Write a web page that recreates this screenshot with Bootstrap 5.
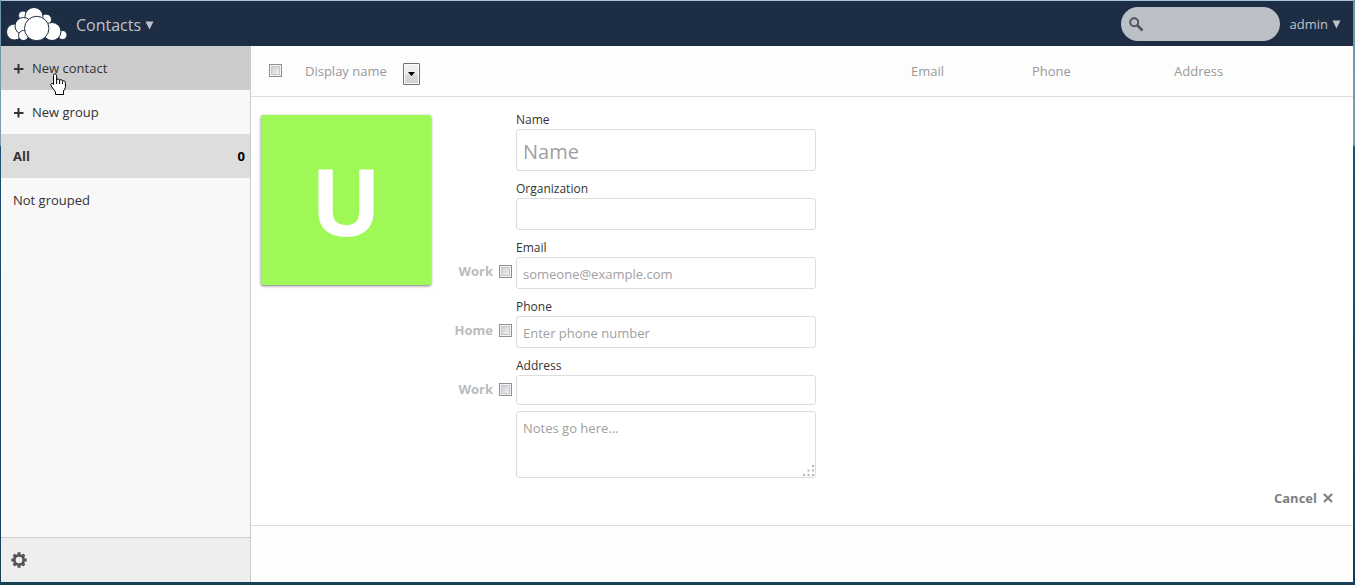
<!DOCTYPE html>
<html lang="en">
<head>
<meta charset="utf-8">
<meta name="viewport" content="width=device-width, initial-scale=1">
<title>Contacts</title>
<link href="https://cdn.jsdelivr.net/npm/bootstrap@5.3.0/dist/css/bootstrap.min.css" rel="stylesheet">
<style>
  body {
    font-family: "Open Sans", "Noto Sans", sans-serif;
    font-size: 13px;
    line-height: 18px;
    color: #333;
    background: linear-gradient(#6b93ab, #7d9fb2 145px, #1c506e 147px, #173f58);
    padding: 0 2px 3px 1px;
  }
  .desk-edge { height: 1px; background: #a6c3db; }
  .app { min-height: calc(100vh - 4px); }

  /* top bar */
  .topbar { height: 45px; background: #1d2d44; padding: 0 12px 0 5px; }
  .topbar a, .user-menu { color: #bfc3c9; text-decoration: none; }
  .app-title { font-size: 16px; line-height: 24px; margin-left: 9px; padding-top: 3px; }
  .user-menu svg { margin-top: 2px; }
  .search-box { width: 159px; margin-right: 10px; }
  .search-box input {
    height: 34px; border: 0; border-radius: 17px; background: #bbc0c7;
    padding: 0 12px 0 30px; font-size: 13px;
  }
  .search-box svg { left: 8px; top: 10px; }

  /* sidebar */
  .sidebar { width: 250px; background: #f8f8f8; border-right: 1px solid #ccc; }
  .side-link {
    height: 44px; padding: 0 5px 0 12px; width: 100%; border: 0; background: none;
    color: #333; text-decoration: none; text-align: left;
  }
  .side-link.hovered { background: #ccc; }
  .side-link.current { background: #ddd; font-weight: 700; }
  .side-link svg { margin-right: 8px; }
  .side-link .total { color: #000; }
  .settings-bar { height: 45px; background: #eee; border-top: 1px solid #ccc; }
  .settings-bar button { border: 0; background: none; padding: 0 10px; }
  .pointer { left: 49px; top: 27px; pointer-events: none; }

  /* contact list header */
  .list-head { table-layout: fixed; width: 100%; border-bottom: 1px solid #ddd; background: #fdfdfd; }
  .list-head th { height: 50px; padding: 0; font-weight: 400; color: #999; vertical-align: middle; }
  .list-head .col-tick { width: 54px; padding-left: 18px; }
  .col-mail { width: 121px; }
  .col-tel { width: 142px; }
  .col-addr { width: 179px; }
  .tick {
    appearance: none; width: 13px; height: 13px; margin: 0; flex: none;
    border: 1px solid #8e8f8f; box-shadow: inset 0 0 0 1px #f4f4f4, inset 0 0 0 2px #c4c7cc;
    background: linear-gradient(135deg, #c4c8d0, #f8f8f8);
  }
  .pick { width: 17px; height: 22px; margin-left: 16px; margin-top: 6px; }
  .pick select {
    appearance: none; width: 17px; height: 22px; padding: 0; border: 1px solid #707070;
    border-radius: 1px; background: linear-gradient(#f2f2f2, #ebebeb 50%, #ddd 50%, #cfcfcf);
    box-shadow: inset 0 0 0 1px #fbfbfb;
  }
  .pick svg { left: 5px; top: 9px; pointer-events: none; }

  /* contact form */
  .main-pane { background: #fdfdfd; }
  .editor { background: #fff; padding: 14px 20px 18px 10px; border-bottom: 1px solid #ddd; }
  .portrait {
    width: 170px; height: 170px; margin-top: 4px; border-radius: 2px; background: #9ef856;
    color: #fff; font-size: 94px; line-height: 170px; font-weight: 700; text-align: center;
    box-shadow: 0 1px 3px #777;
  }
  .field-row { margin-bottom: 9px; }
  .kind { width: 81px; margin-right: 4px; padding-top: 18px; }
  .kind label { height: 28px; gap: 6px; font-weight: 700; color: #bbb; }
  .kind .tick { margin-top: 1px; }
  .entry { width: 300px; }
  .entry label { font-size: 12px; line-height: 18px; height: 18px; }
  .entry input, .entry textarea {
    width: 100%; height: 32px; padding: 3px 6px 1px; border: 1px solid #ddd; border-radius: 3px;
    background: #fff; color: #333; font-size: 13px; line-height: 18px;
  }
  .entry input.full-name { height: 42px; font-size: 20px; line-height: 28px; padding-top: 4px; }
  .entry input.street { height: 30px; }
  .entry textarea { height: 67px; padding: 7px 6px; resize: none; }
  .entry ::placeholder { color: #a0a0a0; opacity: 1; }
  .notes { margin-top: 6px; }
  .grip { right: 1px; bottom: 1px; pointer-events: none; }
  .cancel-row { padding-top: 11px; }
  .cancel { border: 0; background: none; padding: 0; font-weight: 700; color: #808080; gap: 6px; }
</style>
</head>
<body>
<div class="desk-edge"></div>
<div class="app d-flex flex-column">
  <header class="topbar d-flex align-items-center">
    <a href="#" aria-label="Home" class="d-flex">
      <svg width="61" height="34" viewBox="6 6 61 34" fill="#fff" stroke="#1d2d44" stroke-width="1">
        <circle cx="46" cy="18.500" r="5.500"/>
        <circle cx="23" cy="14.500" r="4.500"/>
        <circle cx="34" cy="15.500" r="9"/>
        <circle cx="62.500" cy="34" r="4.500"/>
        <circle cx="14.500" cy="31" r="8"/>
        <circle cx="23.500" cy="25" r="8.500"/>
        <circle cx="23.500" cy="34.500" r="5"/>
        <circle cx="52" cy="30.500" r="9"/>
        <circle cx="36.700" cy="27.500" r="12.200"/>
      </svg>
    </a>
    <a href="#" class="app-title d-flex align-items-center gap-1">Contacts
      <svg width="9" height="9" viewBox="0 0 9 9" fill="#bfc3c9"><path d="M.5.5h8l-4 8z"/></svg>
    </a>
    <div class="search-box position-relative ms-auto">
      <input type="search" class="w-100" aria-label="Search">
      <svg class="position-absolute" width="15" height="15" viewBox="0 0 15 15" fill="none" stroke="#50565f"><circle cx="5.200" cy="5.200" r="4" stroke-width="2"/><path d="M8 8l5.500 5.500" stroke-width="2.600"/></svg>
    </div>
    <a href="#" class="user-menu d-flex align-items-center gap-1">admin
      <svg width="9" height="9" viewBox="0 0 9 9" fill="#bfc3c9"><path d="M.5.5h8l-4 8z"/></svg>
    </a>
  </header>

  <div class="d-flex flex-grow-1">
    <nav class="sidebar d-flex flex-column flex-shrink-0 position-relative">
      <button type="button" class="side-link hovered d-flex align-items-center">
        <svg width="11" height="11" viewBox="0 0 11 11" stroke="#333" stroke-width="2"><path d="M5.500 1v9.500M1 6h9.500"/></svg>New contact
      </button>
      <button type="button" class="side-link d-flex align-items-center">
        <svg width="11" height="11" viewBox="0 0 11 11" stroke="#333" stroke-width="2"><path d="M5.500 1v9.500M1 6h9.500"/></svg>New group
      </button>
      <a href="#" class="side-link current d-flex align-items-center justify-content-between">All<span class="total">0</span></a>
      <a href="#" class="side-link d-flex align-items-center">Not grouped</a>
      <div class="settings-bar d-flex mt-auto">
        <button type="button" aria-label="Settings" class="d-flex align-items-center">
          <svg width="16" height="16" viewBox="-8 -8 16 16" fill="none" stroke="#555">
            <circle r="4.700" stroke-width="2.800"/>
            <path stroke-width="3" d="M0-5v-2.700M0 5v2.700M-5 0h-2.700M5 0h2.700M3.600-3.600l1.800-1.800M-3.600-3.600l-1.800-1.800M3.600 3.600l1.800 1.800M-3.600 3.600l-1.800 1.800"/>
          </svg>
        </button>
      </div>
      <svg class="pointer position-absolute" width="17" height="23" viewBox="0 0 17 23" fill="#fff" stroke="#000" stroke-width="1" stroke-linejoin="round">
        <path d="M3.500 2.500Q3.500.8 5 .8t1.600 1.700V7q0-1 1.400-1t1.600 1.500q.2-1 1.500-.8t1.400 1.500q.3-.7 1.400-.4t1.500 1.700v5.200L13.500 18v3.500h-8V19L1.200 13q-1.200-2 .5-2.500 1-.2 1.800 1z"/>
        <path d="M6.600 7v4M9.600 7.500V11M12.500 8.500V11" fill="none"/>
      </svg>
    </nav>

    <main class="main-pane flex-grow-1">
      <table class="list-head">
        <thead>
          <tr>
            <th class="col-tick" scope="col"><input type="checkbox" class="tick d-block" aria-label="Select all"></th>
            <th scope="col">
              <div class="d-flex align-items-center">Display name
                <span class="pick position-relative d-block">
                  <select class="d-block" aria-label="Sort by"><option></option></select>
                  <svg class="position-absolute" width="7" height="4" viewBox="0 0 7 4"><path d="M0 0h7L3.500 4z"/></svg>
                </span>
              </div>
            </th>
            <th class="col-mail" scope="col">Email</th>
            <th class="col-tel" scope="col">Phone</th>
            <th class="col-addr" scope="col">Address</th>
          </tr>
        </thead>
      </table>

      <form class="editor">
        <div class="d-flex">
          <div class="portrait flex-shrink-0">U</div>
          <div>
            <div class="field-row d-flex">
              <div class="kind"></div>
              <div class="entry"><label class="d-block" for="name">Name</label><input id="name" type="text" class="full-name d-block" placeholder="Name"></div>
            </div>
            <div class="field-row d-flex">
              <div class="kind"></div>
              <div class="entry"><label class="d-block" for="org">Organization</label><input id="org" type="text" class="d-block"></div>
            </div>
            <div class="field-row d-flex">
              <div class="kind"><label class="d-flex align-items-center justify-content-end">Work<input type="checkbox" class="tick"></label></div>
              <div class="entry"><label class="d-block" for="email">Email</label><input id="email" type="email" class="d-block" placeholder="someone@example.com"></div>
            </div>
            <div class="field-row d-flex">
              <div class="kind"><label class="d-flex align-items-center justify-content-end">Home<input type="checkbox" class="tick"></label></div>
              <div class="entry"><label class="d-block" for="phone">Phone</label><input id="phone" type="tel" class="d-block" placeholder="Enter phone number"></div>
            </div>
            <div class="d-flex">
              <div class="kind"><label class="d-flex align-items-center justify-content-end">Work<input type="checkbox" class="tick"></label></div>
              <div class="entry">
                <label class="d-block" for="address">Address</label><input id="address" type="text" class="street d-block">
                <div class="notes position-relative">
                  <textarea class="d-block" aria-label="Notes" placeholder="Notes go here..."></textarea>
                  <svg class="grip position-absolute" width="12" height="12" viewBox="0 0 12 12" fill="#b5b5b5"><path d="M9 0h2v2H9zM4.500 4.500h2v2h-2zM9 4.500h2v2H9zM0 9h2v2H0zM4.500 9h2v2h-2zM9 9h2v2H9z"/></svg>
                </div>
              </div>
            </div>
          </div>
        </div>
        <div class="cancel-row d-flex justify-content-end">
          <button type="button" class="cancel d-flex align-items-center">Cancel
            <svg width="10" height="10" viewBox="0 0 10 10" stroke="#808080" stroke-width="2.200"><path d="M1 1l8 8M9 1L1 9"/></svg>
          </button>
        </div>
      </form>
    </main>
  </div>
</div>
<script src="https://cdn.jsdelivr.net/npm/bootstrap@5.3.0/dist/js/bootstrap.bundle.min.js"></script>
</body>
</html>
